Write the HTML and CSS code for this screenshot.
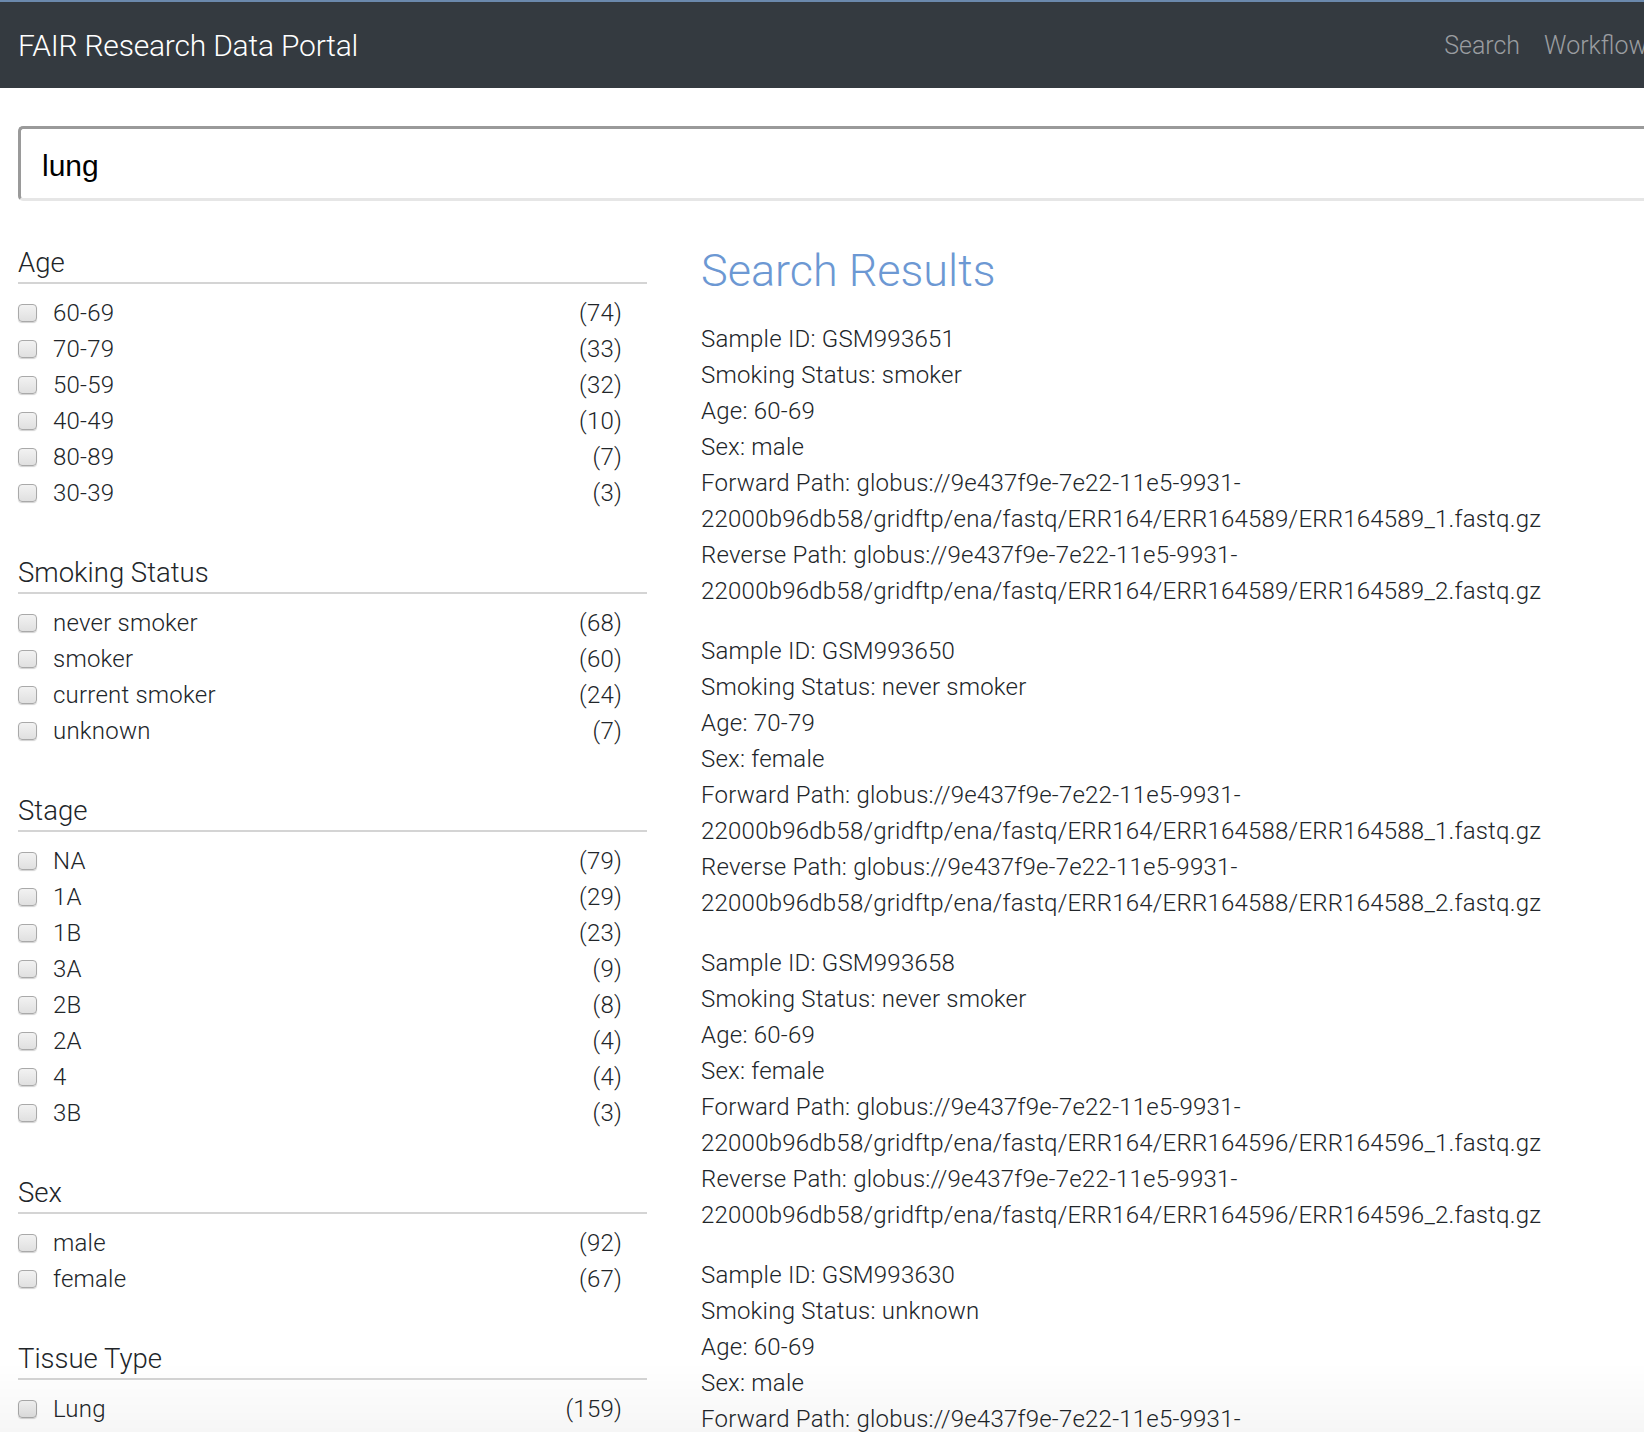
FILE: index.html
```html
<!DOCTYPE html>
<html lang="en">
<head>
<meta charset="utf-8">
<title>FAIR Research Data Portal</title>
<link rel="stylesheet" href="styles.css">
</head>
<body>
<nav class="navbar">
  <span class="brand">FAIR Research Data Portal</span>
  <ul class="nav">
    <li class="nav-item">Search</li>
    <li class="nav-item">Workflows</li>
  </ul>
</nav>
<main class="page">
  <input class="search" type="text" value="lung">
  <div class="row">
    <aside class="facets">
      <section class="facet">
        <h5 class="facet-title">Age</h5>
        <ul class="facet-list">
          <li class="facet-item"><input type="checkbox" class="cb"><span class="label">60-69</span><span class="count">(74)</span></li>
          <li class="facet-item"><input type="checkbox" class="cb"><span class="label">70-79</span><span class="count">(33)</span></li>
          <li class="facet-item"><input type="checkbox" class="cb"><span class="label">50-59</span><span class="count">(32)</span></li>
          <li class="facet-item"><input type="checkbox" class="cb"><span class="label">40-49</span><span class="count">(10)</span></li>
          <li class="facet-item"><input type="checkbox" class="cb"><span class="label">80-89</span><span class="count">(7)</span></li>
          <li class="facet-item"><input type="checkbox" class="cb"><span class="label">30-39</span><span class="count">(3)</span></li>
        </ul>
      </section>
      <section class="facet">
        <h5 class="facet-title">Smoking Status</h5>
        <ul class="facet-list">
          <li class="facet-item"><input type="checkbox" class="cb"><span class="label">never smoker</span><span class="count">(68)</span></li>
          <li class="facet-item"><input type="checkbox" class="cb"><span class="label">smoker</span><span class="count">(60)</span></li>
          <li class="facet-item"><input type="checkbox" class="cb"><span class="label">current smoker</span><span class="count">(24)</span></li>
          <li class="facet-item"><input type="checkbox" class="cb"><span class="label">unknown</span><span class="count">(7)</span></li>
        </ul>
      </section>
      <section class="facet">
        <h5 class="facet-title">Stage</h5>
        <ul class="facet-list">
          <li class="facet-item"><input type="checkbox" class="cb"><span class="label">NA</span><span class="count">(79)</span></li>
          <li class="facet-item"><input type="checkbox" class="cb"><span class="label">1A</span><span class="count">(29)</span></li>
          <li class="facet-item"><input type="checkbox" class="cb"><span class="label">1B</span><span class="count">(23)</span></li>
          <li class="facet-item"><input type="checkbox" class="cb"><span class="label">3A</span><span class="count">(9)</span></li>
          <li class="facet-item"><input type="checkbox" class="cb"><span class="label">2B</span><span class="count">(8)</span></li>
          <li class="facet-item"><input type="checkbox" class="cb"><span class="label">2A</span><span class="count">(4)</span></li>
          <li class="facet-item"><input type="checkbox" class="cb"><span class="label">4</span><span class="count">(4)</span></li>
          <li class="facet-item"><input type="checkbox" class="cb"><span class="label">3B</span><span class="count">(3)</span></li>
        </ul>
      </section>
      <section class="facet">
        <h5 class="facet-title">Sex</h5>
        <ul class="facet-list">
          <li class="facet-item"><input type="checkbox" class="cb"><span class="label">male</span><span class="count">(92)</span></li>
          <li class="facet-item"><input type="checkbox" class="cb"><span class="label">female</span><span class="count">(67)</span></li>
        </ul>
      </section>
      <section class="facet">
        <h5 class="facet-title">Tissue Type</h5>
        <ul class="facet-list">
          <li class="facet-item"><input type="checkbox" class="cb"><span class="label">Lung</span><span class="count">(159)</span></li>
        </ul>
      </section>
    </aside>
    <section class="results">
      <h2 class="results-title">Search Results</h2>
      <div class="record">
        <p>Sample ID: GSM993651</p>
        <p>Smoking Status: smoker</p>
        <p>Age: 60-69</p>
        <p>Sex: male</p>
        <p>Forward Path: globus://9e437f9e-7e22-11e5-9931-22000b96db58/gridftp/ena/fastq/ERR164/ERR164589/ERR164589_1.fastq.gz</p>
        <p>Reverse Path: globus://9e437f9e-7e22-11e5-9931-22000b96db58/gridftp/ena/fastq/ERR164/ERR164589/ERR164589_2.fastq.gz</p>
      </div>
      <div class="record">
        <p>Sample ID: GSM993650</p>
        <p>Smoking Status: never smoker</p>
        <p>Age: 70-79</p>
        <p>Sex: female</p>
        <p>Forward Path: globus://9e437f9e-7e22-11e5-9931-22000b96db58/gridftp/ena/fastq/ERR164/ERR164588/ERR164588_1.fastq.gz</p>
        <p>Reverse Path: globus://9e437f9e-7e22-11e5-9931-22000b96db58/gridftp/ena/fastq/ERR164/ERR164588/ERR164588_2.fastq.gz</p>
      </div>
      <div class="record">
        <p>Sample ID: GSM993658</p>
        <p>Smoking Status: never smoker</p>
        <p>Age: 60-69</p>
        <p>Sex: female</p>
        <p>Forward Path: globus://9e437f9e-7e22-11e5-9931-22000b96db58/gridftp/ena/fastq/ERR164/ERR164596/ERR164596_1.fastq.gz</p>
        <p>Reverse Path: globus://9e437f9e-7e22-11e5-9931-22000b96db58/gridftp/ena/fastq/ERR164/ERR164596/ERR164596_2.fastq.gz</p>
      </div>
      <div class="record">
        <p>Sample ID: GSM993630</p>
        <p>Smoking Status: unknown</p>
        <p>Age: 60-69</p>
        <p>Sex: male</p>
        <p>Forward Path: globus://9e437f9e-7e22-11e5-9931-22000b96db58/gridftp/ena/fastq/ERR164/ERR164576/ERR164576_1.fastq.gz</p>
        <p>Reverse Path: globus://9e437f9e-7e22-11e5-9931-22000b96db58/gridftp/ena/fastq/ERR164/ERR164576/ERR164576_2.fastq.gz</p>
      </div>
    </section>
  </div>
</main>
<div class="bottom-shade"></div>
</body>
</html>
```

FILE: styles.css
```css
html, body {
  overflow: hidden;
}
body {
  margin: 0;
  background: #fff;
  color: #212529;
  font-family: Roboto, "Helvetica Neue", Arial, sans-serif;
  font-weight: 300;
  font-size: 24px;
  line-height: 36px;
  letter-spacing: 0.22px;
}
.navbar {
  width: 1690px;
  height: 88px;
  box-sizing: border-box;
  border-top: 2px solid #6b89ad;
  background: #343a40;
  display: flex;
  align-items: center;
  padding: 2px 18px 0;
  letter-spacing: 0;
}
.brand {
  color: #fff;
  font-size: 30px;
  font-weight: 300;
  letter-spacing: -0.2px;
  line-height: 40px;
}
.nav {
  list-style: none;
  margin: 0 0 0 auto;
  padding: 0;
  display: flex;
}
.nav-item {
  color: #9a9da0;
  font-size: 25px;
  padding: 0 12px;
}
.page {
  width: 1700px;
  padding: 38px 18px 0;
}
.search {
  display: block;
  box-sizing: border-box;
  width: 1700px;
  height: 75px;
  margin: 0;
  padding: 5px 21px 0;
  border: 3px solid;
  border-color: #9a9a9a #e6e6e6 #e6e6e6 #9a9a9a;
  border-radius: 5px;
  font-family: "Liberation Sans", Arial, sans-serif;
  font-size: 30px;
  font-weight: 400;
  color: #000;
  outline: none;
}
.row {
  display: flex;
  align-items: flex-start;
}
.facets {
  width: 629px;
  flex: none;
}
.facet {
  margin-top: 43px;
}
.facet:first-child {
  margin-top: 42px;
}
.facet-title {
  margin: 0;
  font-size: 27.5px;
  font-weight: 300;
  line-height: 34px;
  padding: 3px 0 2px;
  border-bottom: 2px solid #d4d4d4;
  letter-spacing: 0;
}
.facet-list {
  list-style: none;
  margin: 10px 0 0;
  padding: 0 25px 0 0;
}
.facet-item {
  display: flex;
  align-items: center;
  box-sizing: border-box;
  height: 36px;
  padding-top: 2px;
}
.cb {
  appearance: none;
  -webkit-appearance: none;
  width: 19px;
  height: 18px;
  margin: 0 16px 0 0;
  box-sizing: border-box;
  border: 1px solid #a9a9a9;
  border-radius: 4px;
  background: linear-gradient(#f2f2f2, #e0e0e0);
  box-shadow: 0 1px 1px rgba(0, 0, 0, 0.18);
}
.count {
  margin-left: auto;
}
.results {
  margin-left: 54px;
  width: 900px;
  padding-top: 42px;
  flex: none;
}
.results-title {
  margin: 0 0 23px;
  font-size: 45px;
  font-weight: 300;
  line-height: 55px;
  color: #6c98d3;
  letter-spacing: 0;
}
.record {
  margin-bottom: 24px;
}
.record p {
  margin: 0;
}
.bottom-shade {
  position: fixed;
  left: 0;
  right: 0;
  bottom: 0;
  height: 70px;
  background: linear-gradient(rgba(0, 0, 0, 0), rgba(0, 0, 0, 0.035));
  pointer-events: none;
}
```
